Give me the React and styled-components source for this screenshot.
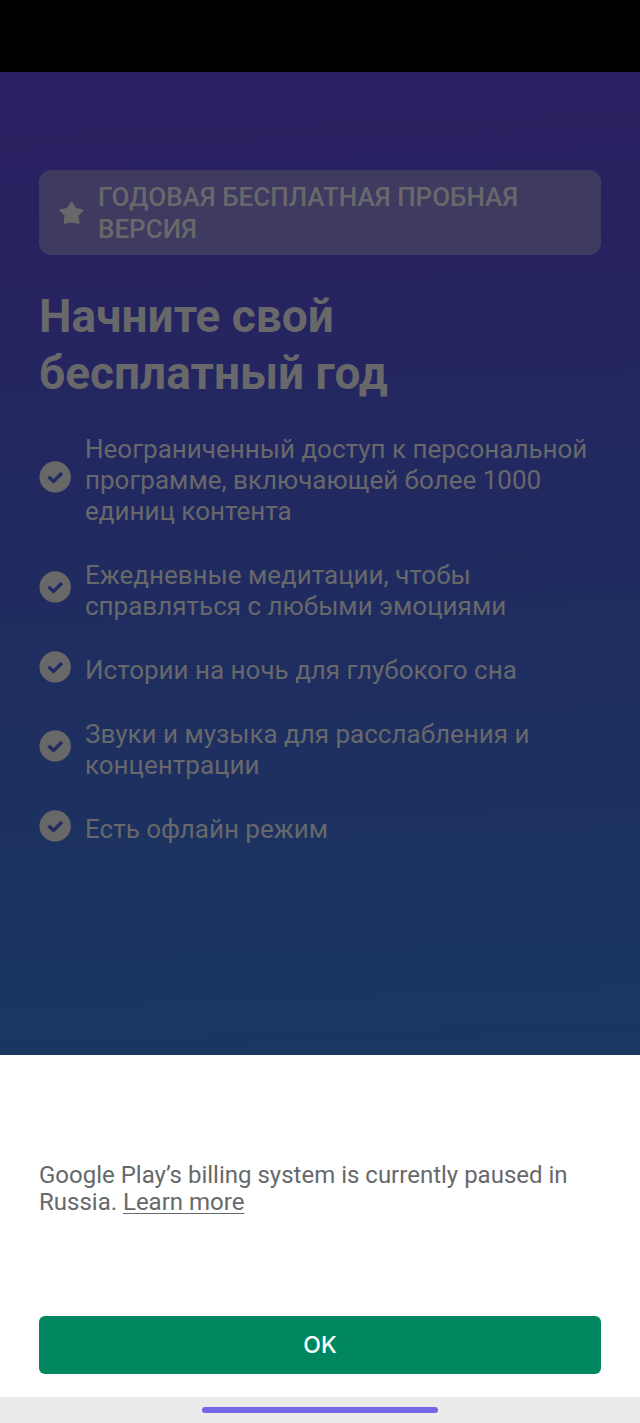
import React from "react";
import styled, { createGlobalStyle } from "styled-components";

const GlobalStyle = createGlobalStyle`
  *, *::before, *::after { box-sizing: border-box; }
  html, body, #root { height: 100%; }
  body {
    margin: 0;
    background: #ffffff;
    font-family: Roboto, "Liberation Sans", sans-serif;
  }
`;

const Screen = styled.div`
  display: flex;
  flex-direction: column;
  min-height: 100%;
`;

const StatusBar = styled.div`
  flex: none;
  height: 72px;
  background: #000000;
`;

const Offer = styled.main`
  flex: 1;
  padding: 98px 39px 40px;
  color: #68686b;
  background: linear-gradient(178deg, #2b1f61 0%, #252560 28%, #202b60 50%, #1c3260 78%, #193761 100%);
`;

const Badge = styled.div`
  display: flex;
  align-items: center;
  gap: 14px;
  padding: 11px 20px 10px;
  border-radius: 12px;
  background: #3f3a60;
  font-size: 26px;
  font-weight: 500;
  line-height: 32px;
  text-transform: uppercase;

  svg { flex: none; }
`;

const Title = styled.h1`
  max-width: 400px;
  margin: 33px 0 0;
  font-size: 46px;
  font-weight: 700;
  line-height: 57px;
`;

const Benefits = styled.ul`
  display: flex;
  flex-direction: column;
  gap: 25px;
  margin: 24px 0 0;
  padding: 0;
  list-style: none;
`;

const Benefit = styled.li`
  display: flex;
  align-items: center;
  gap: 14px;

  svg { flex: none; }
`;

const BenefitText = styled.span`
  padding-top: 8px;
  font-size: 26px;
  font-weight: 400;
  line-height: 31px;
`;

const Sheet = styled.section`
  display: flex;
  flex-direction: column;
  gap: 100px;
  padding: 107px 39px 23px;
  background: #ffffff;
`;

const Notice = styled.p`
  margin: 0;
  color: #66696b;
  font-size: 24px;
  font-weight: 400;
  line-height: 27px;
`;

const NoticeLink = styled.a`
  color: inherit;
  text-decoration: underline;
  text-decoration-thickness: 1px;
  text-underline-offset: 3px;
`;

const ConfirmButton = styled.button`
  width: 100%;
  height: 58px;
  padding: 0;
  border: 0;
  border-radius: 6px;
  background: #01875f;
  color: #ffffff;
  font-family: Inter, Roboto, sans-serif;
  font-size: 23px;
  font-weight: 500;
`;

const NavBar = styled.div`
  display: flex;
  flex: none;
  align-items: center;
  justify-content: center;
  height: 26px;
  background: #eaeaea;
`;

const NavHandle = styled.div`
  width: 37%;
  height: 6px;
  border-radius: 3px;
  background: #7367e8;
`;

function StarIcon() {
  return (
    <svg width="25" height="24" viewBox="0 0 25 24" aria-hidden="true">
      <path
        d="M12.5 1.6 L16.3 7.9 L23.5 9.2 L18.4 14.3 L19.4 21.7 L12.5 20.4 L5.6 21.7 L6.6 14.3 L1.5 9.2 L8.7 7.9 Z"
        fill="#68686b"
        stroke="#68686b"
        strokeWidth="2"
        strokeLinejoin="round"
      />
    </svg>
  );
}

function CheckIcon() {
  return (
    <svg width="32" height="32" viewBox="0 0 32 32" aria-hidden="true">
      <circle cx="16.2" cy="16" r="15.7" fill="#686868" />
      <path d="M9.6 15.7 L14.5 20.4 L23 12" fill="none" stroke="#222b62" strokeWidth="3.3" />
    </svg>
  );
}

const benefits = [
  "Неограниченный доступ к персональной программе, включающей более 1000 единиц контента",
  "Ежедневные медитации, чтобы справляться с любыми эмоциями",
  "Истории на ночь для глубокого сна",
  "Звуки и музыка для расслабления и концентрации",
  "Есть офлайн режим",
];

export default function App() {
  return (
    <>
      <GlobalStyle />
      <Screen lang="ru">
        <StatusBar />
        <Offer>
          <Badge>
            <StarIcon />
            <span>Годовая бесплатная пробная версия</span>
          </Badge>
          <Title>Начните свой бесплатный год</Title>
          <Benefits>
            {benefits.map((text) => (
              <Benefit key={text}>
                <CheckIcon />
                <BenefitText>{text}</BenefitText>
              </Benefit>
            ))}
          </Benefits>
        </Offer>
        <Sheet lang="en">
          <Notice>
            Google Play’s billing system is currently paused in Russia.{" "}
            <NoticeLink href="#learn-more">Learn more</NoticeLink>
          </Notice>
          <ConfirmButton type="button">OK</ConfirmButton>
        </Sheet>
        <NavBar>
          <NavHandle />
        </NavBar>
      </Screen>
    </>
  );
}
